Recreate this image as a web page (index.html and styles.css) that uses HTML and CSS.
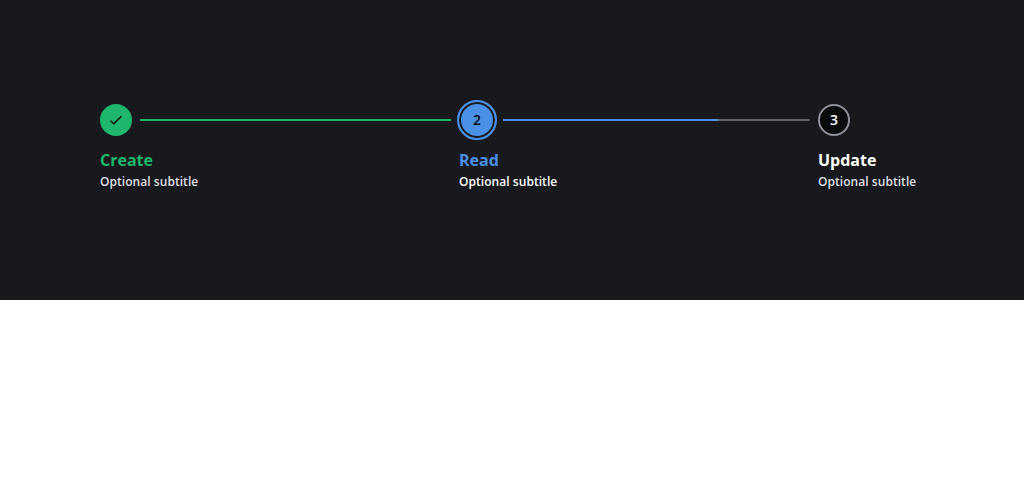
FILE: index.html
```html
<!DOCTYPE html>
<html lang="en">
<head>
<meta charset="utf-8">
<title>Stepper</title>
<link rel="stylesheet" href="styles.css">
</head>
<body>
<main class="stage">
  <ol class="stepper">
    <li class="step step--done">
      <div class="step__track">
        <span class="step__marker"><svg class="step__check" viewBox="0 0 16 16" width="16" height="16" aria-hidden="true"><path d="M2.5 8.7 5.8 11.8 13.4 4.2"/></svg></span>
        <span class="step__line"></span>
      </div>
      <div class="step__title">Create</div>
      <div class="step__subtitle">Optional subtitle</div>
    </li>
    <li class="step step--active">
      <div class="step__track">
        <span class="step__marker">2</span>
        <span class="step__line"><span class="step__progress"></span></span>
      </div>
      <div class="step__title">Read</div>
      <div class="step__subtitle">Optional subtitle</div>
    </li>
    <li class="step step--last">
      <div class="step__track">
        <span class="step__marker">3</span>
      </div>
      <div class="step__title">Update</div>
      <div class="step__subtitle">Optional subtitle</div>
    </li>
  </ol>
</main>
</body>
</html>
```

FILE: styles.css
```css
* { box-sizing: border-box; }

body {
  margin: 0;
  background: #fff;
  font-family: "Open Sans", sans-serif;
}

.stage {
  height: 300px;
  padding: 100px;
  background: #18191c;
}

.stepper {
  display: flex;
  margin: 0;
  padding: 0;
  list-style: none;
}

.step { flex: 0 0 359px; }
.step--last { flex: 0 0 106px; }

.step__track {
  display: flex;
  align-items: center;
  height: 40px;
  margin-bottom: 8px;
}

.step__marker {
  display: flex;
  flex: none;
  align-items: center;
  justify-content: center;
  width: 32px;
  height: 32px;
  border-radius: 50%;
  font-size: 14px;
  font-weight: 600;
  line-height: 20px;
}

.step__line {
  flex: 1;
  height: 2px;
  margin: 0 8px;
  background: #5c636b;
}

.step__title {
  font-size: 16px;
  font-weight: 700;
  line-height: 24px;
  color: #fff;
}

.step__subtitle {
  font-size: 12px;
  font-weight: 600;
  line-height: 20px;
  letter-spacing: 0.05px;
  color: #dcdfe3;
}

.step__check {
  fill: none;
  stroke: #0a0c0e;
  stroke-width: 1.5;
}

.step--done .step__marker,
.step--done .step__line { background: #1eb56d; }
.step--done .step__title { color: #1eb56d; }

.step--active .step__marker {
  width: 40px;
  height: 40px;
  margin-left: -2px;
  border: 2px solid #4a90e6;
  background: #4a90e6;
  box-shadow: inset 0 0 0 2px #18191c;
  color: #0a0c0e;
}
.step--active .step__line { margin-left: 6px; }
.step--active .step__title { color: #4a90e6; }
.step--active .step__subtitle { color: #fff; }

.step__progress {
  display: block;
  width: 70%;
  height: 2px;
  background: #4a90e6;
}

.step--last .step__marker {
  border: 2px solid #8d929b;
  background: #0a0c0c;
  color: #fff;
}
```
